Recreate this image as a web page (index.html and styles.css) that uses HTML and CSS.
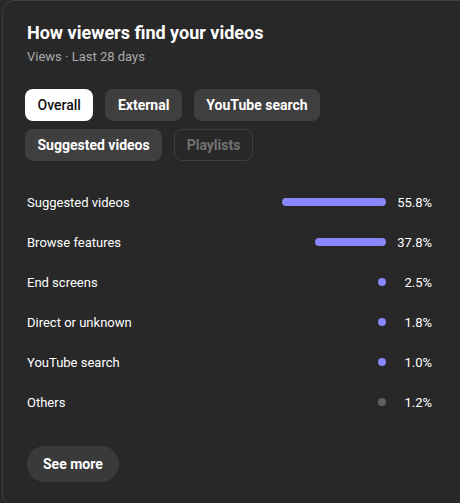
FILE: index.html
```html
<!DOCTYPE html>
<html>
<head>
<meta charset="utf-8">
<link rel="stylesheet" href="styles.css">
</head>
<body>
<div class="card">
  <h1 class="title">How viewers find your videos</h1>
  <div class="subtitle">Views · Last 28 days</div>
  <div class="chips">
    <button class="chip chip-active">Overall</button>
    <button class="chip">External</button>
    <button class="chip">YouTube search</button>
    <button class="chip">Suggested videos</button>
    <button class="chip chip-disabled">Playlists</button>
  </div>
  <div class="rows">
    <div class="row"><span class="label">Suggested videos</span><span class="track"><span class="bar" style="width:104px"></span></span><span class="pct">55.8%</span></div>
    <div class="row"><span class="label">Browse features</span><span class="track"><span class="bar" style="width:71px"></span></span><span class="pct">37.8%</span></div>
    <div class="row"><span class="label">End screens</span><span class="track"><span class="bar dot"></span></span><span class="pct">2.5%</span></div>
    <div class="row"><span class="label">Direct or unknown</span><span class="track"><span class="bar dot"></span></span><span class="pct">1.8%</span></div>
    <div class="row"><span class="label">YouTube search</span><span class="track"><span class="bar dot"></span></span><span class="pct">1.0%</span></div>
    <div class="row"><span class="label">Others</span><span class="track"><span class="bar dot dot-gray"></span></span><span class="pct">1.2%</span></div>
  </div>
  <button class="more">See more</button>
</div>
</body>
</html>
```

FILE: styles.css
```css
html, body {
  margin: 0;
  padding: 0;
  background: #282828;
  overflow: hidden;
}
body {
  width: 460px;
  height: 503px;
  font-family: Roboto, "Liberation Sans", sans-serif;
  color: #fff;
}
.card {
  box-sizing: border-box;
  margin-left: 2px;
  width: 480px;
  height: 506px;
  border: 1px solid #3e3e3e;
  border-radius: 12px;
  background: #282828;
  padding: 20px 0 0 24px;
}
.title {
  margin: 0;
  font-size: 18px;
  font-weight: 700;
  line-height: 24px;
  letter-spacing: 0;
}
.subtitle {
  margin-top: 3px;
  font-size: 13px;
  line-height: 18px;
  color: #aaaaaa;
}
.chips {
  margin-top: 23px;
  width: 320px;
  display: flex;
  flex-wrap: wrap;
  gap: 8px 12px;
  margin-left: -2px;
}
.chip {
  height: 32px;
  padding: 0 11.5px;
  border: 1px solid transparent;
  border-radius: 8px;
  background: #3f3f3f;
  color: #fff;
  font-family: Roboto, "Liberation Sans", sans-serif;
  font-size: 14px;
  font-weight: 700;
}
.chip-active {
  background: #fff;
  color: #0f0f0f;
  font-weight: 500;
}
.chip-disabled {
  background: transparent;
  border-color: #3e3e3e;
  color: #717171;
}
.rows {
  margin-top: 21px;
  width: 405px;
}
.row {
  height: 40px;
  display: flex;
  align-items: center;
  font-size: 13px;
}
.label {
  flex: 1;
}
.track {
  display: flex;
  justify-content: flex-end;
  align-items: center;
}
.bar {
  display: block;
  height: 8px;
  border-radius: 4px;
  background: #8a86fb;
}
.dot {
  width: 8px;
}
.dot-gray {
  background: #606060;
}
.pct {
  width: 46px;
  text-align: right;
}
.more {
  margin-top: 24px;
  height: 36px;
  padding: 0 16px;
  border: none;
  border-radius: 18px;
  background: #3a3a3a;
  color: #fff;
  font-family: Roboto, "Liberation Sans", sans-serif;
  font-size: 14px;
  font-weight: 700;
}
```
